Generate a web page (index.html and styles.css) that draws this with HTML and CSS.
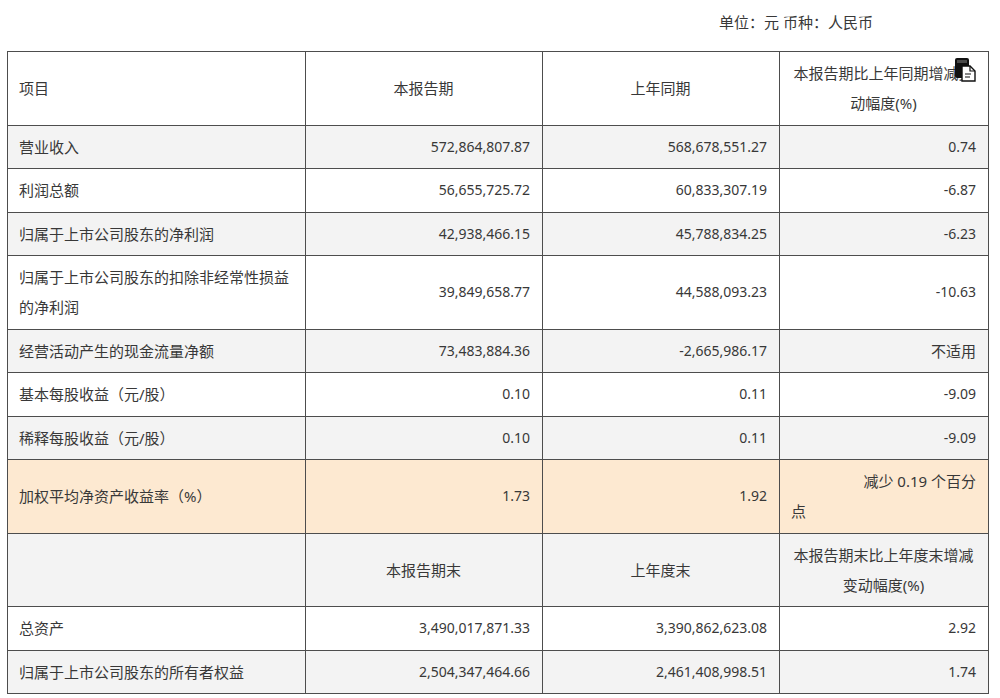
FILE: index.html
```html
<!DOCTYPE html>
<html lang="zh-CN">
<head>
<meta charset="utf-8">
<title>主要会计数据和财务指标</title>
<link rel="stylesheet" href="styles.css">
</head>
<body>
<div class="page">
  <div class="unit">单位：元 币种：人民币</div>
  <table class="fin">
    <colgroup>
      <col class="c1"><col class="c2"><col class="c3"><col class="c4">
    </colgroup>
    <tbody>
      <tr class="white">
        <td class="label">项目</td>
        <td class="head">本报告期</td>
        <td class="head">上年同期</td>
        <td class="head icon-cell">本报告期比上年同期增减变动幅度(%)
          <svg class="doc-icon" width="22" height="25" viewBox="0 0 22 25" aria-hidden="true">
            <rect x="1" y="1" width="14" height="20" rx="2" fill="#111"/>
            <rect x="3" y="3" width="10" height="3" fill="#4a4a4a"/>
            <path d="M8 9 H16 L21 14 V24 H8 Z" fill="#fff" stroke="#111" stroke-width="1.4"/>
            <path d="M16 9 V14 H21" fill="none" stroke="#111" stroke-width="1.2"/>
            <path d="M11 17 H17 M11 20 H16" stroke="#111" stroke-width="1.2"/>
          </svg>
        </td>
      </tr>
      <tr class="gray">
        <td class="label">营业收入</td>
        <td class="num">572,864,807.87</td>
        <td class="num">568,678,551.27</td>
        <td class="num">0.74</td>
      </tr>
      <tr class="white">
        <td class="label">利润总额</td>
        <td class="num">56,655,725.72</td>
        <td class="num">60,833,307.19</td>
        <td class="num">-6.87</td>
      </tr>
      <tr class="gray">
        <td class="label">归属于上市公司股东的净利润</td>
        <td class="num">42,938,466.15</td>
        <td class="num">45,788,834.25</td>
        <td class="num">-6.23</td>
      </tr>
      <tr class="white">
        <td class="label">归属于上市公司股东的扣除非经常性损益的净利润</td>
        <td class="num">39,849,658.77</td>
        <td class="num">44,588,093.23</td>
        <td class="num">-10.63</td>
      </tr>
      <tr class="gray">
        <td class="label">经营活动产生的现金流量净额</td>
        <td class="num">73,483,884.36</td>
        <td class="num">-2,665,986.17</td>
        <td class="num cjk">不适用</td>
      </tr>
      <tr class="white">
        <td class="label">基本每股收益（元/股）</td>
        <td class="num">0.10</td>
        <td class="num">0.11</td>
        <td class="num">-9.09</td>
      </tr>
      <tr class="gray">
        <td class="label">稀释每股收益（元/股）</td>
        <td class="num">0.10</td>
        <td class="num">0.11</td>
        <td class="num">-9.09</td>
      </tr>
      <tr class="orange">
        <td class="label">加权平均净资产收益率（%）</td>
        <td class="num">1.73</td>
        <td class="num">1.92</td>
        <td class="split">
          <div class="split-first">减少 0.19 个百分</div>
          <div class="split-last">点</div>
        </td>
      </tr>
      <tr class="gray">
        <td class="label"></td>
        <td class="head">本报告期末</td>
        <td class="head">上年度末</td>
        <td class="head">本报告期末比上年度末增减变动幅度(%)</td>
      </tr>
      <tr class="white">
        <td class="label">总资产</td>
        <td class="num">3,490,017,871.33</td>
        <td class="num">3,390,862,623.08</td>
        <td class="num">2.92</td>
      </tr>
      <tr class="gray">
        <td class="label">归属于上市公司股东的所有者权益</td>
        <td class="num">2,504,347,464.66</td>
        <td class="num">2,461,408,998.51</td>
        <td class="num">1.74</td>
      </tr>
    </tbody>
  </table>
</div>
</body>
</html>
```
FILE: styles.css
```css
html, body {
  margin: 0;
  padding: 0;
  background: #ffffff;
}

body {
  font-family: "Noto Sans", "Noto Sans CJK SC", sans-serif;
  color: #383838;
}

.page {
  width: 1000px;
}

.unit {
  padding: 7px 127px 0 0;
  line-height: 30px;
  height: 30px;
  margin-bottom: 14px;
  text-align: right;
  font-size: 15px;
}

.fin {
  margin-left: 7px;
  width: 981px;
  table-layout: fixed;
  border-collapse: collapse;
}

.c1 { width: 298px; }
.c2 { width: 237px; }
.c3 { width: 237px; }
.c4 { width: 209px; }

.fin td {
  border: 1px solid #4d4d4d;
  padding: 6.25px 12px 6.25px 11px;
  line-height: 30px;
  font-size: 15px;
  vertical-align: middle;
  word-break: break-all;
}

.white td { background: #ffffff; }
.gray td { background: #f3f3f3; }
.orange td { background: #fde9d1; }

.label {
  text-align: left;
}

.head {
  text-align: center;
}

.num {
  text-align: right;
  font-size: 14px !important;
}

.num.cjk {
  font-size: 15px !important;
}

.split-first {
  text-align: right;
}

.split-last {
  text-align: left;
}

.icon-cell {
  position: relative;
}

.doc-icon {
  position: absolute;
  top: 5px;
  right: 12px;
}
```
